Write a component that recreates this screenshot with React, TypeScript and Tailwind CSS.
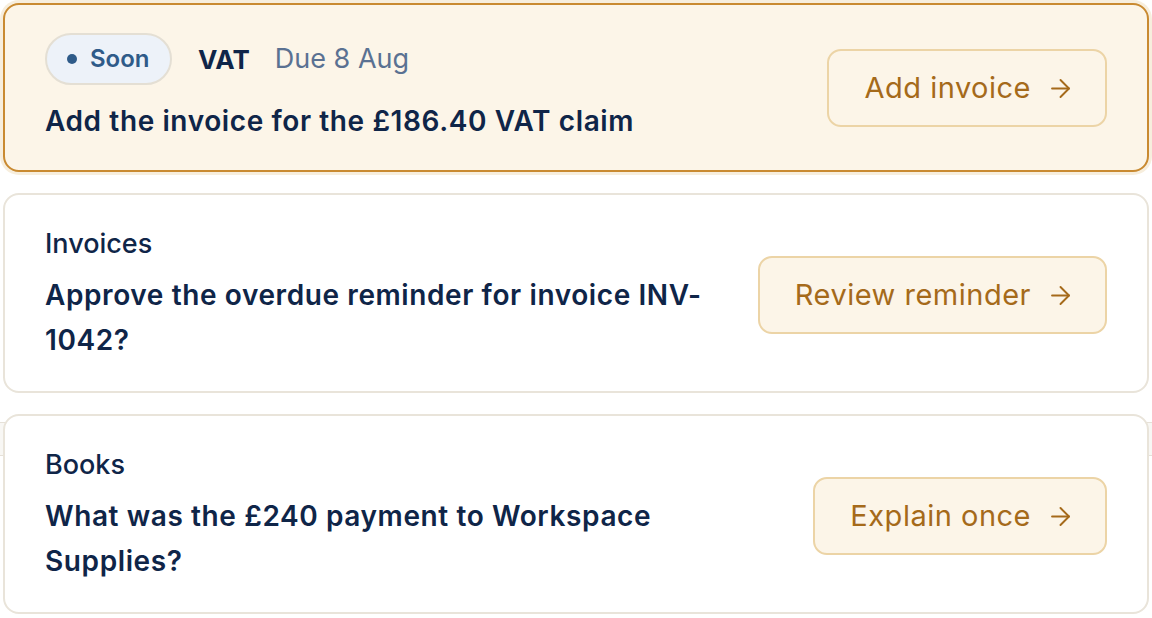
import React from "react";
import { ArrowRight } from "lucide-react";

type Task = {
  label: string;
  question: string;
  action: string;
};

const tasks: Task[] = [
  {
    label: "Invoices",
    question: "Approve the overdue reminder for invoice INV-1042?",
    action: "Review reminder",
  },
  {
    label: "Books",
    question: "What was the £240 payment to Workspace Supplies?",
    action: "Explain once",
  },
];

const ActionButton: React.FC<{ text: string }> = ({ text }) => (
  <button className="flex h-[78px] shrink-0 items-center gap-[15px] rounded-[14px] border-2 border-[#ecd4a6] bg-[#fcf5e8] pl-[35px] pr-[30px] text-[29px] leading-[36px] tracking-[0.5px] text-[#a56a1a]">
    {text}
    <ArrowRight size={29} strokeWidth={1.6} />
  </button>
);

export default function App() {
  return (
    <div className="relative min-h-[618px] bg-white px-[3px] pt-[3px] font-['Inter',sans-serif] text-[#0f2548]">
      {/* row peeking out from behind the last card */}
      <div className="absolute left-0 right-0 top-[422px] h-[34px] border-y border-[#e6e1d8] bg-[#f8f7f4]" />

      <div className="relative flex flex-col gap-[21px]">
        {/* Highlighted VAT task */}
        <div className="flex items-center justify-between gap-12 rounded-[16px] border-2 border-[#c98a31] bg-[#fcf5e8] pl-[40px] pr-[40px] pt-[28px] pb-[27px] shadow-[0_0_0_3px_#f7eedd]">
          <div className="flex flex-col gap-[14px]">
            <div className="flex items-center">
              <span className="flex h-[52px] w-[127px] items-center gap-[13px] rounded-full border-2 border-[#e4dfd4] bg-[#edf2f9] pl-[20px] text-[24px] font-semibold text-[#2f5b89]">
                <span className="h-[10px] w-[10px] rounded-full bg-[#2f5b89]" />
                Soon
              </span>
              <span className="ml-[26px] text-[26px] font-bold">VAT</span>
              <span className="ml-[25px] text-[27px] text-[#5a7192]">Due 8 Aug</span>
            </div>
            <p className="text-[28px] font-semibold leading-[44px] tracking-[0.6px]">
              Add the invoice for the £186.40 VAT claim
            </p>
          </div>
          <ActionButton text="Add invoice" />
        </div>

        {tasks.map((t) => (
          <div
            key={t.label}
            className="flex items-center justify-between gap-12 rounded-[16px] border-2 border-[#e9e4da] bg-white pl-[40px] pr-[40px] pt-[32px] pb-[28px]"
          >
            <div className="flex flex-1 flex-col gap-[12px]">
              <p className="text-[27px] font-medium leading-[34px]">{t.label}</p>
              <p className="text-[28px] font-semibold leading-[45px] tracking-[0.6px]">{t.question}</p>
            </div>
            <ActionButton text={t.action} />
          </div>
        ))}
      </div>
    </div>
  );
}
